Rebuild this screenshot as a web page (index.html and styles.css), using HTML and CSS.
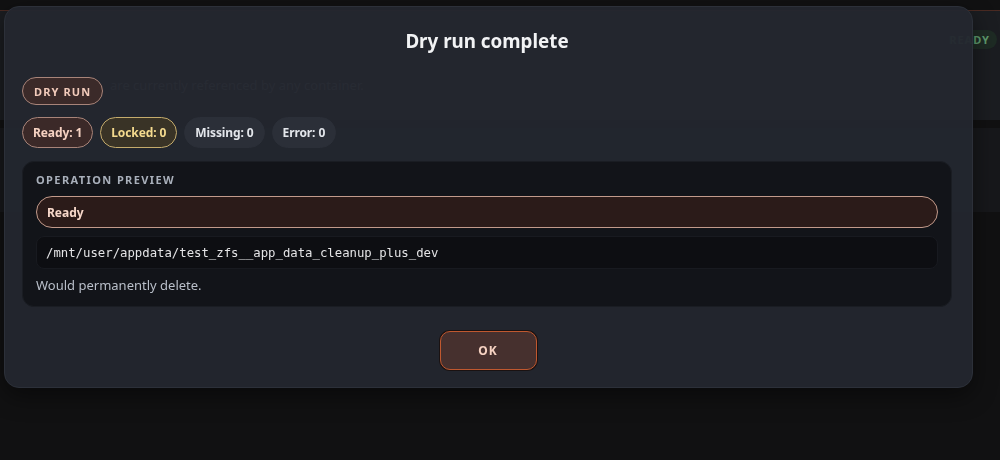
FILE: index.html
```html
<!DOCTYPE html>
<html lang="en">
<head>
    <meta charset="UTF-8">
    <meta name="viewport" content="width=device-width, initial-scale=1.0">
    <title>Dry run complete</title>
    <link rel="stylesheet" href="styles.css">
</head>
<body>
    <div class="page">
        <section class="panel">
            <div class="panel-head">
                <span class="status-badge">Ready</span>
            </div>
            <p class="panel-note">are currently referenced by any container.</p>
        </section>
        <section class="panel-lower"></section>
    </div>

    <div class="backdrop">
        <div class="modal">
            <h2 class="modal-title">Dry run complete</h2>

            <div class="badge-row">
                <span class="pill pill-dry">Dry run</span>
            </div>

            <div class="badge-row counts">
                <span class="pill pill-ready">Ready: 1</span>
                <span class="pill pill-locked">Locked: 0</span>
                <span class="pill pill-muted">Missing: 0</span>
                <span class="pill pill-muted">Error: 0</span>
            </div>

            <div class="preview">
                <div class="preview-label">Operation preview</div>
                <div class="preview-state">Ready</div>
                <div class="preview-path">/mnt/user/appdata/test_zfs__app_data_cleanup_plus_dev</div>
                <div class="preview-note">Would permanently delete.</div>
            </div>

            <div class="modal-actions">
                <button class="btn-ok">OK</button>
            </div>
        </div>
    </div>
</body>
</html>
```

FILE: styles.css
```css
/* base */
body {
    margin: 0;
    background-color: #111112;
    font-family: "Noto Sans", "Open Sans", sans-serif;
    color: #e6e8ec;
    overflow: hidden;
}

/* page behind the dialog */
.page {
    padding-top: 10px;
}

.panel {
    height: 109px;
    background-color: #1b1d21;
    border-top: 1px solid #4a2a22;
    display: flex;
    flex-direction: column;
}

.panel-head {
    display: flex;
    justify-content: flex-end;
    padding: 19px 3px 0 0;
}

.status-badge {
    background-color: #1e2b24;
    color: #5f9c6e;
    font-size: 11px;
    font-weight: 700;
    letter-spacing: 1px;
    text-transform: uppercase;
    padding: 2px 7px 2px 10px;
    border-radius: 10px;
}

.panel-note {
    margin: 27px 0 0 0;
    padding-left: 110px;
    font-size: 13px;
    color: #8a8f98;
}

.panel-lower {
    margin-top: 8px;
    height: 84px;
    background-color: #17181b;
}

/* dialog */
.backdrop {
    position: fixed;
    inset: 0;
}

.modal {
    position: absolute;
    left: 4px;
    top: 6px;
    width: 930px;
    padding: 20px 20px 17px 17px;
    background-color: rgba(35, 39, 47, 0.96);
    border: 1px solid #2c3039;
    border-radius: 15px;
    box-shadow: 0 8px 24px rgba(0, 0, 0, 0.45);
}

.modal-title {
    margin: 0;
    text-align: center;
    font-size: 18.8px;
    line-height: 28px;
    font-weight: 700;
    color: #f2f3f5;
}

.badge-row {
    display: flex;
    gap: 7px;
    margin-top: 22px;
}

.badge-row.counts {
    margin-top: 12px;
}

.pill {
    display: inline-flex;
    align-items: center;
    border-radius: 16px;
    font-weight: 700;
    white-space: nowrap;
}

.pill-dry {
    height: 26px;
    padding: 0 11px;
    font-size: 11px;
    letter-spacing: 1.1px;
    text-transform: uppercase;
    background-color: #3b2a29;
    border: 1px solid #a88479;
    color: #f2cbbb;
}

.pill-ready,
.pill-locked,
.pill-muted {
    height: 29px;
    padding: 0 10px;
    font-size: 12px;
    letter-spacing: -0.1px;
}

.pill-ready {
    background-color: #3b2928;
    border: 1px solid #a88479;
    color: #f6d2c2;
}

.pill-locked {
    background-color: #393326;
    border: 1px solid #c4ab6c;
    color: #f4da8e;
}

.pill-muted {
    background-color: #2b2f38;
    border: 1px solid #2b2f38;
    color: #e3e6eb;
}

/* preview card */
.preview {
    margin-top: 13px;
    background-color: #121419;
    border: 1px solid #1a1d23;
    border-radius: 12px;
    padding: 11px 13px 12px 13px;
}

.preview-label {
    font-size: 11px;
    line-height: 14px;
    font-weight: 700;
    letter-spacing: 1.4px;
    text-transform: uppercase;
    color: #a9b0bb;
}

.preview-state {
    margin-top: 9px;
    height: 30px;
    display: flex;
    align-items: center;
    padding: 0 10px;
    background-color: #2b1b19;
    border: 1px solid #c29a8b;
    border-radius: 16px;
    font-size: 12px;
    font-weight: 700;
    color: #f7d8ca;
}

.preview-path {
    margin-top: 8px;
    height: 31px;
    display: flex;
    align-items: center;
    padding: 0 9px;
    background-color: #0d0e12;
    border: 1px solid #181a20;
    border-radius: 8px;
    font-family: "DejaVu Sans Mono", "Liberation Mono", monospace;
    font-size: 12.3px;
    color: #e4e4e6;
}

.preview-note {
    margin-top: 8px;
    font-size: 13px;
    line-height: 17px;
    color: #b9bfc9;
}

/* actions */
.modal-actions {
    display: flex;
    justify-content: center;
    margin-top: 24px;
}

.btn-ok {
    width: 97px;
    height: 39px;
    margin-left: 2px;
    background-color: #46302e;
    border: 1px solid #c0582f;
    border-radius: 10px;
    box-shadow: 0 0 0 1px #1a1212;
    font-family: "Noto Sans", sans-serif;
    font-size: 12px;
    font-weight: 700;
    letter-spacing: 1px;
    color: #f6d2c2;
    cursor: pointer;
}
```
